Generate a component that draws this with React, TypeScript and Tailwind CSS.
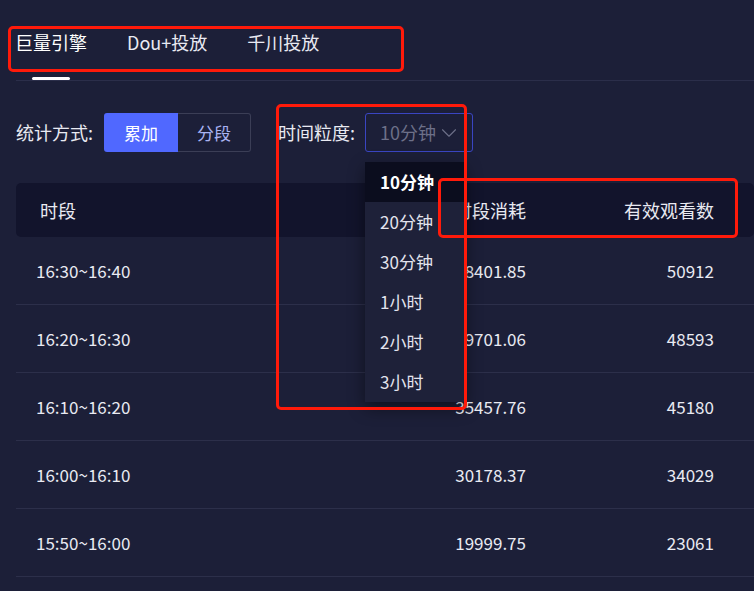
import { ChevronDown } from 'lucide-react';

const rows = [
  { time: '16:30~16:40', cost: '38401.85', views: '50912' },
  { time: '16:20~16:30', cost: '39701.06', views: '48593' },
  { time: '16:10~16:20', cost: '35457.76', views: '45180' },
  { time: '16:00~16:10', cost: '30178.37', views: '34029' },
  { time: '15:50~16:00', cost: '19999.75', views: '23061' },
];

const options = ['10分钟', '20分钟', '30分钟', '1小时', '2小时', '3小时'];

export default function App() {
  return (
    <div className="relative w-[754px] h-[591px] overflow-hidden bg-[#1c1f38] text-[#e9eaf2] font-['Noto_Sans_CJK_SC',sans-serif]">
      {/* tabs */}
      <div className="ml-4 border-b border-[#2b2e4a] pt-[30px]">
        <div className="-ml-[1px] flex items-start gap-10 text-[18px] leading-[24px]">
          <div className="flex flex-col items-center">
            <span className="text-white">巨量引擎</span>
            <div className="mt-[23px] w-[38px] h-[3px] rounded-full bg-white" />
          </div>
          <span>Dou+投放</span>
          <span>千川投放</span>
        </div>
      </div>

      {/* controls */}
      <div className="mt-[32px] ml-4 flex items-center text-[18px]">
        <span>统计方式:</span>
        <div className="ml-[11px] flex">
          <button className="w-[74px] h-[39px] rounded-l-[3px] bg-[#5068ff] text-white text-[17px]">累加</button>
          <button className="w-[73px] h-[39px] rounded-r-[3px] border border-[#3b3e56] border-l-0 text-[#a9b3f2] text-[17px]">分段</button>
        </div>
        <span className="ml-[27px]">时间粒度:</span>
        <div className="relative ml-[10px]">
          <div className="w-[108px] h-[39px] rounded-[3px] border border-[#3a45c2] flex items-center pl-[14px] pr-[10px] text-[#6d7088]">
            <span className="flex-1">10分钟</span>
            <ChevronDown size={26} strokeWidth={1} />
          </div>
          <div className="absolute left-0 top-[49px] z-10 w-[100px] bg-[#1e2139] shadow-[0_6px_16px_rgba(0,0,0,0.45)] text-[17px]">
            {options.map((o, i) => (
              <div
                key={o}
                className={`h-[40px] flex items-center pl-[15px] ${i === 0 ? 'bg-[#0b0d1e] font-bold text-white' : 'text-[#e3e4ee]'}`}
              >
                {o}
              </div>
            ))}
          </div>
        </div>
      </div>

      {/* table */}
      <div className="mt-[31px] ml-4 text-[17px]">
        <div className="h-[54px] rounded-[5px] bg-[#12142c] flex items-center pl-6 pr-10 text-[18px]">
          <span className="flex-1">时段</span>
          <span className="text-right">时段消耗</span>
          <span className="w-[188px] text-right">有效观看数</span>
        </div>
        {rows.map((r) => (
          <div key={r.time} className="h-[68px] border-b border-[#2c2f4a] flex items-center pl-5 pr-10">
            <span className="flex-1">{r.time}</span>
            <span className="text-right">{r.cost}</span>
            <span className="w-[188px] text-right">{r.views}</span>
          </div>
        ))}
      </div>

      {/* annotation boxes */}
      <div className="absolute left-[8px] top-[26px] w-[396px] h-[46px] border-[3px] border-[#ff1a0a] rounded-[5px] z-20" />
      <div className="absolute left-[276px] top-[104px] w-[191px] h-[306px] border-[3px] border-[#ff1a0a] rounded-[5px] z-20" />
      <div className="absolute left-[438px] top-[178px] w-[300px] h-[60px] border-[3px] border-[#ff1a0a] rounded-[5px] z-20" />
    </div>
  );
}
